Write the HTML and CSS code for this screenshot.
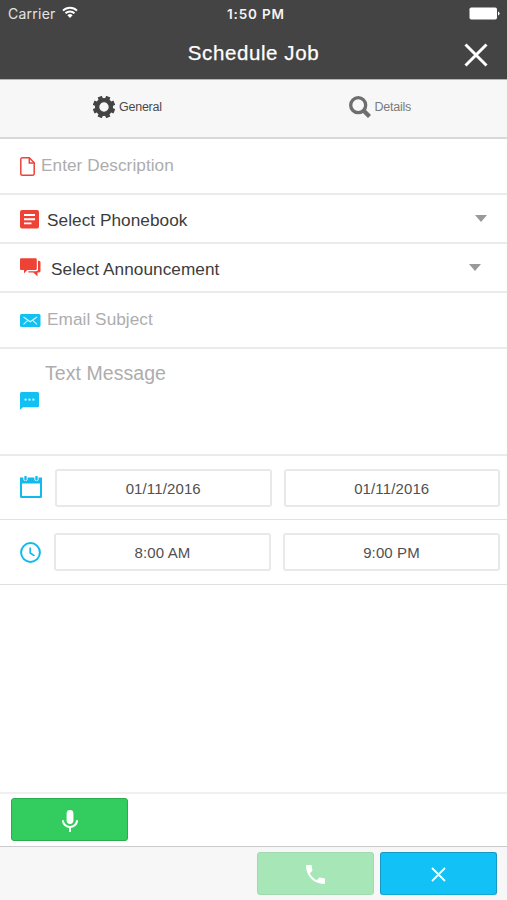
FILE: index.html
```html
<!DOCTYPE html>
<html lang="en">
<head>
<meta charset="utf-8">
<title>Schedule Job</title>
<link rel="stylesheet" href="styles.css">
</head>
<body>
<div class="app">
  <header class="header">
    <div class="status">
      <div class="carrier"><span class="carrier-name">Carrier</span>
        <svg class="wifi" width="16" height="13" viewBox="0 0 16 13" fill="none" stroke="#fff" stroke-width="1.9"><path d="M1 4.6a10 10 0 0 1 14 0M3.5 7.3a6.4 6.4 0 0 1 9 0"/><path d="M5.4 9.3a3.7 3.7 0 0 1 5.2 0L8 12z" fill="#fff" stroke="none"/></svg>
      </div>
      <span class="clock">1:50 PM</span>
      <svg class="battery" width="31" height="13" viewBox="0 0 31 13" fill="#fff"><rect x="0.5" y="0.5" width="27.5" height="12" rx="1.8"/><path d="M29 4.5q1.6.6 1.6 2t-1.6 2z"/></svg>
    </div>
    <div class="titlebar">
      <h1 class="title">Schedule Job</h1>
      <svg class="close" width="24" height="24" viewBox="0 0 24 24" stroke="#fff" stroke-width="3"><path d="M1.5 1.5l21 21M22.5 1.5l-21 21"/></svg>
    </div>
  </header>
  <nav class="tabs">
    <div class="tab tab-general">
      <svg width="22" height="22" viewBox="-11 -11 22 22" stroke="#444" fill="none"><circle r="6.900" stroke-width="4.400"/><path transform="rotate(22.5)" stroke-width="4.600" stroke-linejoin="round" d="M0-7V-11.200M0 7V11.200M-7 0H-11.200M7 0H11.200M5 5L7.900 7.900M-5-5L-7.900-7.900M5-5L7.900-7.900M-5 5L-7.900 7.900"/></svg>
      <span>General</span>
    </div>
    <div class="tab tab-details">
      <svg width="22" height="22" viewBox="0 0 22 22" fill="none" stroke="#6e6e6e"><circle cx="9.200" cy="9.200" r="7.500" stroke-width="3.300"/><path d="M14.500 14.500l6 6" stroke-width="4.300"/></svg>
      <span>Details</span>
    </div>
  </nav>
  <main class="form">
    <div class="row row-description">
      <svg width="15" height="19" viewBox="0 0 15 19" fill="none" stroke="#ef4236" stroke-width="1.5"><path d="M2.300.8H9.300L14.200 5.800V16.700a1.500 1.500 0 0 1-1.500 1.500H2.300a1.500 1.500 0 0 1-1.500-1.500V2.300a1.500 1.500 0 0 1 1.500-1.500z"/><path d="M9.300 1v5h5"/></svg>
      <span class="label hint">Enter Description</span>
    </div>
    <div class="row row-phonebook">
      <svg width="19" height="19" viewBox="0 0 19 19"><rect width="19" height="18.500" rx="2" fill="#ef4236"/><path d="M4 5h11M4 9.300h11M4 13.400h7.500" stroke="#fff" stroke-width="1.900"/></svg>
      <span class="label">Select Phonebook</span>
      <i class="caret"></i>
    </div>
    <div class="row row-announcement">
      <svg width="21" height="19" viewBox="0 0 21 19" fill="#ef4236"><path d="M1.200.3H15.600Q16.800.3 16.800 1.500V11Q16.800 12 15.600 12H7.200L4 15.400V12H1.200Q0 12 0 11V1.500Q0 .3 1.200.3z"/><path d="M18 2.700h1Q20.500 2.700 20.500 4.200V13Q20.500 14.400 19 14.400H17.500V18.500L13.300 14.400H8.300V13.200H16.300Q18 13.200 18 11.500z"/></svg>
      <span class="label">Select Announcement</span>
      <i class="caret"></i>
    </div>
    <div class="row row-email">
      <svg width="21" height="13" viewBox="0 0 21 13"><rect width="20.500" height="13" rx="1.500" fill="#12c0f2"/><path d="M3.500 3 10.200 7.800 17 3M3.500 10.300l4-3.600M17 10.300l-4-3.600" fill="none" stroke="#d8f5fd" stroke-width="1.100"/></svg>
      <span class="label hint">Email Subject</span>
    </div>
    <div class="row row-message">
      <svg width="19" height="18" viewBox="0 0 19 18"><path fill="#12c0f2" d="M1.500 0H17.500Q19 0 19 1.500V13.800Q19 15.300 17.500 15.300H3L0 17.700V1.500Q0 0 1.500 0z"/><g fill="#d8f5fd"><circle cx="5.600" cy="7.700" r="1.150"/><circle cx="9.500" cy="7.700" r="1.150"/><circle cx="13.400" cy="7.700" r="1.150"/></g></svg>
      <span class="label hint">Text Message</span>
    </div>
    <div class="row row-date">
      <svg width="22" height="22" viewBox="0 0 22 22"><path fill="#12b9ec" fill-rule="evenodd" d="M0 1.500H22V20.500Q22 22 20.500 22H1.500Q0 22 0 20.500zM2 7.500V20H20V7.500z"/><path d="M5.500 0v3.200M16.500 0v3.200" stroke="#fff" stroke-width="4.200" stroke-linecap="round"/><path d="M5.500 1v2.500M16.500 1v2.500" stroke="#12b9ec" stroke-width="2.400" stroke-linecap="round"/></svg>
      <div class="fields"><div class="field">01/11/2016</div><div class="field">01/11/2016</div></div>
    </div>
    <div class="row row-time">
      <svg width="21" height="21" viewBox="0 0 21 21" fill="none" stroke="#12b9ec"><circle cx="10.500" cy="10.500" r="9.400" stroke-width="2"/><path d="M10.200 5.500V11L14.500 13.800" stroke-width="1.600"/></svg>
      <div class="fields"><div class="field">8:00 AM</div><div class="field">9:00 PM</div></div>
    </div>
  </main>
  <div class="recorder">
    <div class="button record"><svg width="16" height="22" viewBox="0 0 16 22"><rect x="4.600" y="0" width="6.800" height="14" rx="3.400" fill="#fff"/><path d="M.9 10.300a7.100 6.700 0 0 0 14.200 0M8 17v5" fill="none" stroke="#fff" stroke-width="1.900"/></svg></div>
  </div>
  <footer class="footer">
    <div class="button call"><svg width="19" height="19" viewBox="3 3 18 18"><path fill="#fff" d="M6.620 10.790c1.440 2.830 3.760 5.140 6.590 6.590l2.200-2.200c.27-.27.670-.36 1.020-.24 1.120.37 2.330.57 3.570.57.55 0 1 .45 1 1V20c0 .55-.45 1-1 1-9.390 0-17-7.610-17-17 0-.55.45-1 1-1h3.500c.55 0 1 .45 1 1 0 1.250.2 2.450.57 3.570.11.350.030.740-.25 1.020l-2.200 2.200z"/></svg></div>
    <div class="button cancel"><svg width="15" height="15" viewBox="0 0 15 15" stroke="#fff" stroke-width="1.800"><path d="M1 1l13 13M14 1L1 14"/></svg></div>
  </footer>
</div>
</body>
</html>
```
FILE: styles.css
```css
* { box-sizing: border-box; }
body { margin: 0; background: #fff; font-family: "Liberation Sans", Arial, sans-serif; }
svg { display: block; flex: none; }
.app { width: 507px; height: 900px; display: flex; flex-direction: column; overflow: hidden; }
.header { height: 79px; flex: none; background: #444; color: #fff; }
.status { height: 28px; display: grid; grid-template-columns: 219px auto 1fr; align-items: center; padding: 0 7px 0 8px; font: 13.5px/16px Inter, sans-serif; }
.carrier { display: flex; gap: 6px; align-items: center; }
.carrier-name { color: #e4e4e4; font-size: 14px; letter-spacing: .25px; }
.wifi { margin-top: -3px; }
.clock { font-weight: 600; letter-spacing: .85px; color: #f4f4f4; }
.battery { justify-self: end; margin-top: -1px; }
.titlebar { height: 51px; display: grid; grid-template-columns: 1fr auto 1fr; padding: 0 19px; }
.title { grid-column: 2; margin: 13px 0 0; font-size: 20.5px; line-height: 24px; font-weight: 400; -webkit-text-stroke: .25px #fff; letter-spacing: .6px; }
.close { justify-self: end; margin-top: 15px; }
.tabs { height: 60px; flex: none; display: grid; grid-template-columns: 1fr 1fr; background: #f7f7f7; border-bottom: 2px solid #d8d8d8; border-top: 1px solid #b5b5b5; }
.tab { display: flex; align-items: center; gap: 4px; padding-bottom: 3px; font-size: 12.5px; letter-spacing: -.25px; color: #4a4a4a; }
.tab-general { padding-left: 93px; }
.tab-details { padding-left: 95px; color: #7b7b7b; }
.form { flex: 1; }
.row { display: flex; align-items: flex-start; padding-left: 20px; border-bottom: 2px solid #ebebeb; }
.label { font-size: 17.2px; line-height: 20px; letter-spacing: .06px; color: #3c3c3c; white-space: nowrap; }
.hint { color: #adadad; }
.caret { margin-left: auto; border: 6px solid transparent; border-top: 7px solid #999; border-bottom: 0; }
.row-description { height: 56px; }
.row-description svg { margin-top: 18px; }
.row-description .label { margin: 16px 0 0 6px; }
.row-phonebook { height: 49px; padding-right: 20px; }
.row-phonebook svg { margin-top: 15px; }
.row-phonebook .label { margin: 15px 0 0 8px; }
.row-phonebook .caret { margin-top: 20px; }
.row-announcement { height: 49px; padding-right: 26px; }
.row-announcement svg { margin-top: 14px; }
.row-announcement .label { margin: 15px 0 0 10px; }
.row-announcement .caret { margin-top: 20px; }
.row-email { height: 56px; }
.row-email svg { margin-top: 21px; }
.row-email .label { margin: 16px 0 0 6px; }
.row-message { height: 107px; }
.row-message svg { margin-top: 43px; }
.row-message .label { margin: 14px 0 0 6px; font-size: 19.5px; }
.row-date { height: 64px; border-bottom-width: 1px; border-color: #e2e2e2; padding-top: 13px; }
.row-date svg { margin-top: 7px; }
.row-time { height: 65px; border-bottom-width: 1px; border-color: #dfdfdf; padding-top: 13px; }
.row-time svg { margin-top: 9px; }
.fields { flex: 1; display: grid; grid-template-columns: 1fr 1fr; gap: 12px; padding-right: 7px; margin-left: 13px; }
.field { height: 38px; border: 2px solid #e9e9e9; border-radius: 3px; text-align: center; font-size: 15px; line-height: 35px; letter-spacing: .12px; color: #505050; }
.row-time .field { line-height: 36px; }
.recorder { height: 54px; flex: none; border-top: 2px solid #f0f0f0; padding: 4px 11px; }
.footer { height: 54px; flex: none; display: flex; justify-content: flex-end; gap: 6px; padding: 5px 10px 0 0; border-top: 1px solid #cbcbcb; background: #f7f7f7; }
.button { width: 117px; height: 43px; border: 1px solid; border-radius: 3px; display: flex; align-items: center; justify-content: center; padding-top: 2px; }
.record { background: #33cd5f; border-color: #28ad4d; }
.call { background: #a7e6b7; border-color: #a3d9b1; }
.cancel { background: #12c1f5; border-color: #1599c2; border-bottom-color: #13a9d6; }
```
